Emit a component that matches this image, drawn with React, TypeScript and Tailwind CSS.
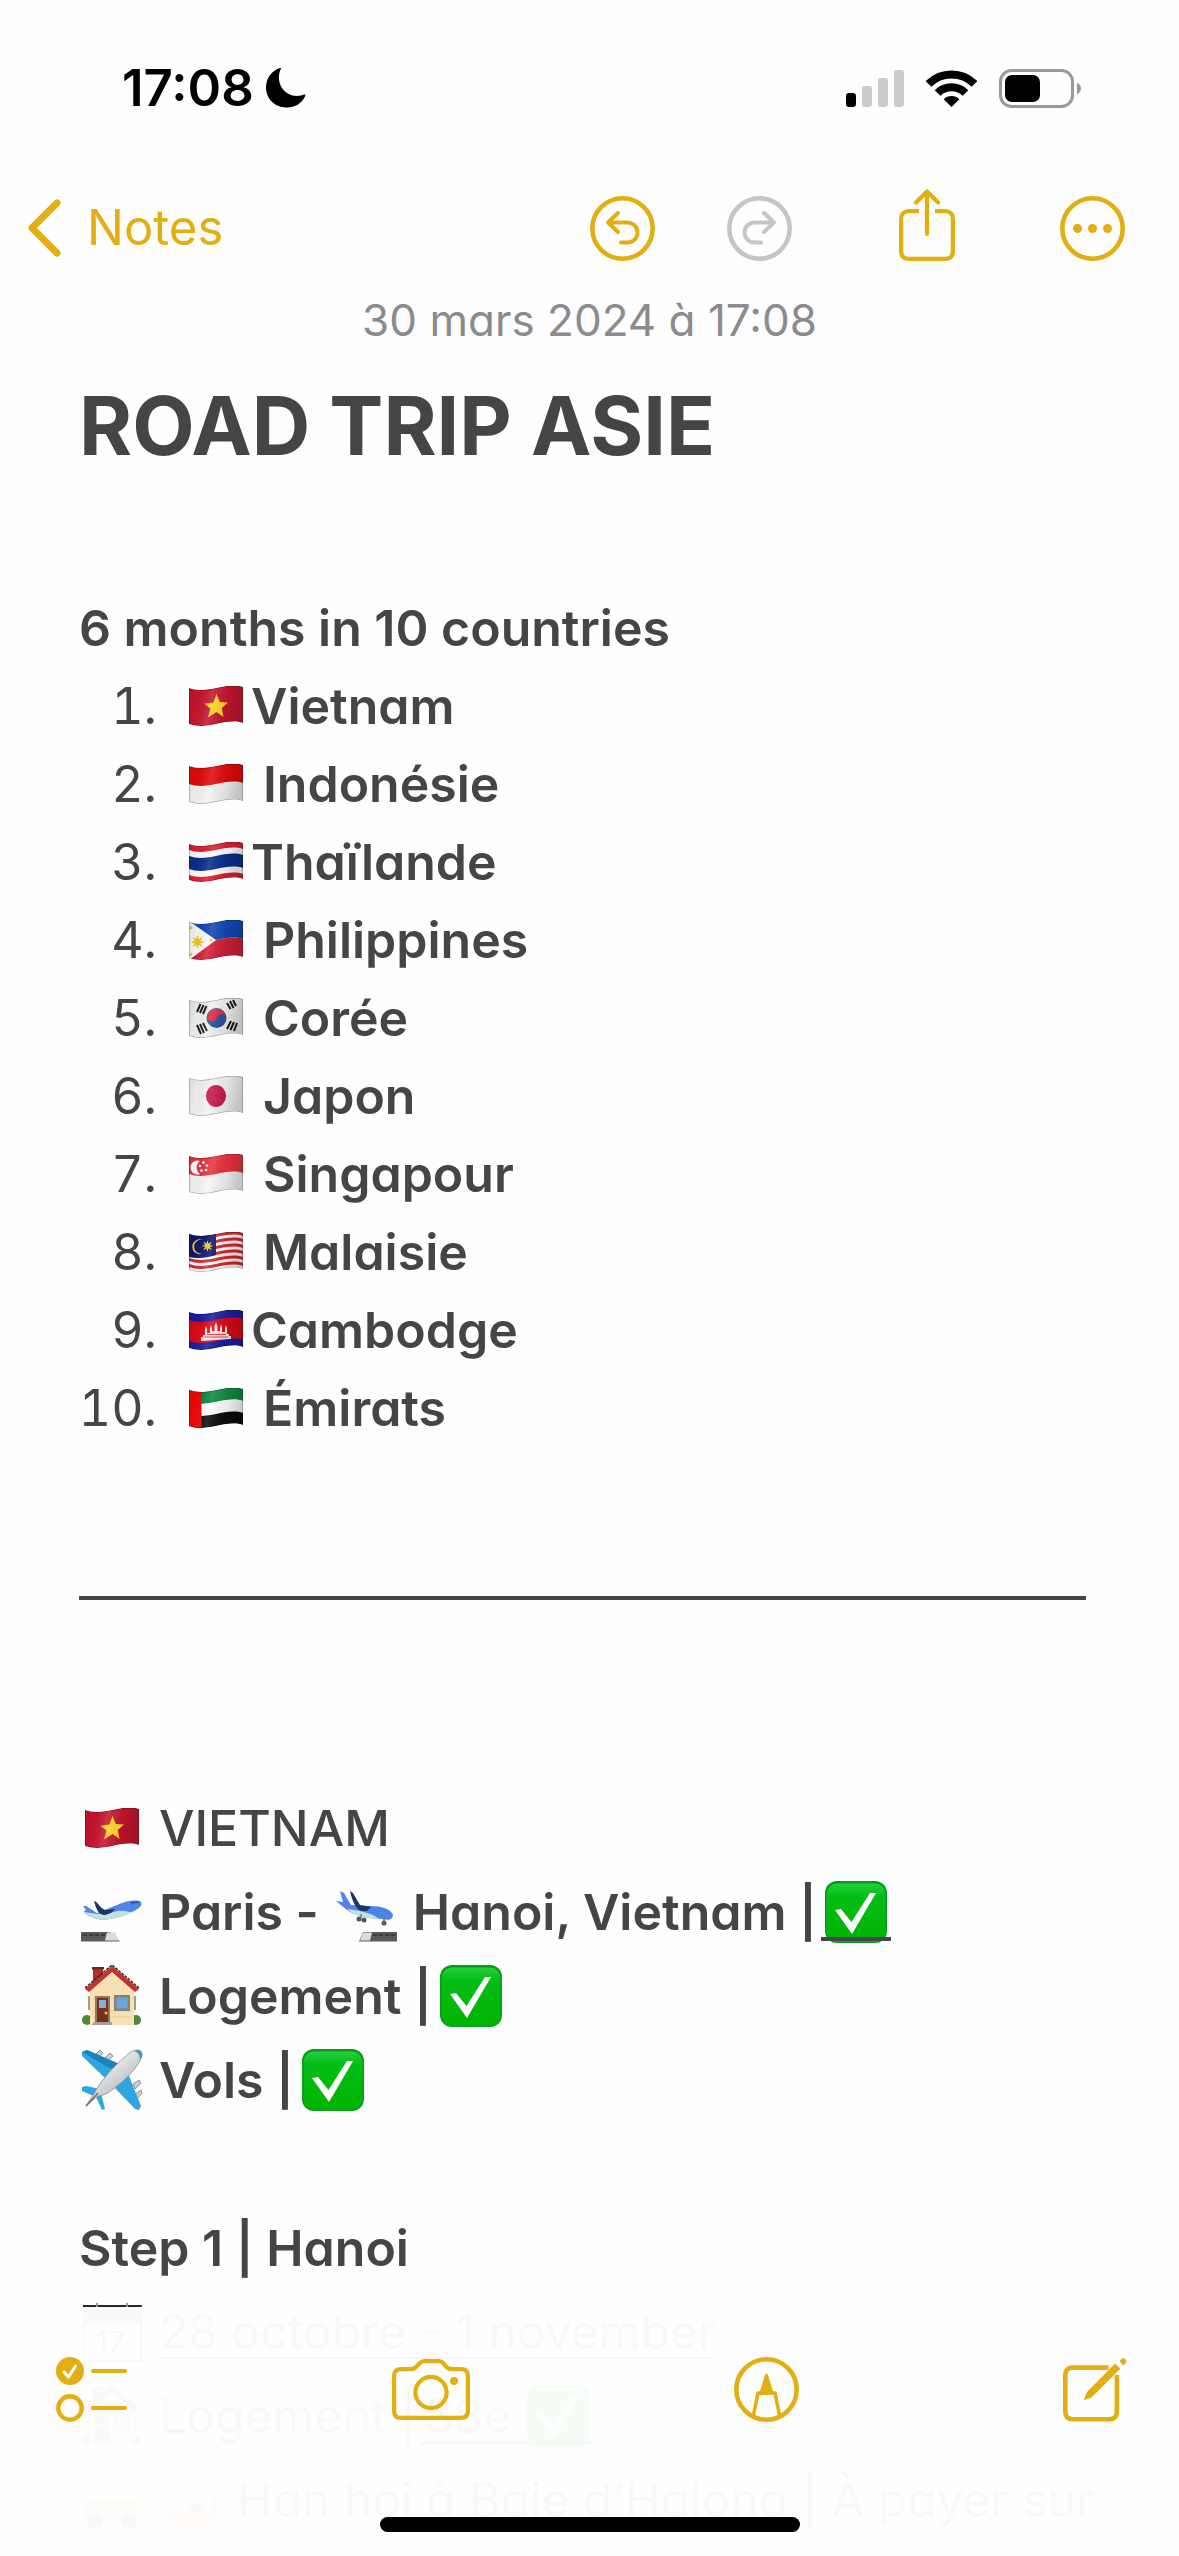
import { useId, type ReactNode } from "react";

const GOLD = "#e3ae12";

/* ---------- flags ---------- */

const edge = (y: number) => `0 ${y + 2} C8 ${y + 5} 18 ${y + 4} 27 ${y + 2} S46 ${y - 2} 54 ${y + 1}`;
const edgeBack = (y: number) => `54 ${y + 1} C46 ${y - 2} 36 ${y} 27 ${y + 2} S8 ${y + 5} 0 ${y + 2}`;
const band = (top: number, bottom: number) => `M${edge(top)} L${edgeBack(bottom)} Z`;

function Flag({ label, children }: { label: string; children: ReactNode }) {
  const id = useId();
  return (
    <svg role="img" aria-label={label} viewBox="0 0 54 40" className="h-10 w-[54px] shrink-0">
      <defs>
        <linearGradient id={`${id}g`} x1="0" x2="1" y1="0" y2="0.15">
          <stop offset="0" stopColor="#000" stopOpacity="0.12" />
          <stop offset="0.2" stopColor="#000" stopOpacity="0.04" />
          <stop offset="0.45" stopColor="#fff" stopOpacity="0.12" />
          <stop offset="0.75" stopColor="#000" stopOpacity="0.08" />
          <stop offset="1" stopColor="#000" stopOpacity="0.2" />
        </linearGradient>
        <clipPath id={`${id}c`}>
          <path d={band(0, 36)} />
        </clipPath>
      </defs>
      <g clipPath={`url(#${id}c)`}>
        {children}
        <path d={band(0, 36)} fill={`url(#${id}g)`} stroke="#000" strokeOpacity="0.28" strokeWidth="1.5" />
      </g>
    </svg>
  );
}

const STAR = "M27.5 8 L30.8 16 L39 16.5 L32.8 22 L34.5 31 L27.5 26 L19 31.5 L21.5 22.5 L15.5 17.8 L24.4 16.5 Z";

const FlagVietnam = () => (
  <Flag label="Drapeau du Vietnam">
    <path d={band(0, 36)} fill="#c8152f" />
    <path d={STAR} fill="#ffd827" />
  </Flag>
);
const FlagIndonesia = () => (
  <Flag label="Drapeau de l’Indonésie">
    <path d={band(0, 36)} fill="#f4f4f4" />
    <path d={band(0, 18)} fill="#e30a0a" />
  </Flag>
);
const FlagThailand = () => (
  <Flag label="Drapeau de la Thaïlande">
    <path d={band(0, 36)} fill="#dd2033" />
    <path d={band(6, 31)} fill="#fff" />
    <path d={band(12, 25)} fill="#0a2e8c" />
  </Flag>
);
const FlagPhilippines = () => (
  <Flag label="Drapeau des Philippines">
    <path d={band(0, 18)} fill="#0f48b5" />
    <path d={band(18, 36)} fill="#d3203a" />
    <path d="M0 1 L27 20 L0 40 Z" fill="#fafafa" />
    <circle cx="8.5" cy="22" r="3.4" fill="#f4c414" />
    <path
      d="M8.5 16v12M2.5 22h12M4.3 17.8l8.4 8.4M4.3 26.2l8.4-8.4"
      stroke="#f4c414"
      strokeWidth="1.4"
    />
    <g fill="#f4c414">
      <circle cx="2" cy="8" r="1.4" />
      <circle cx="22" cy="20" r="1.4" />
      <circle cx="2" cy="34.5" r="1.4" />
    </g>
  </Flag>
);
const FlagKorea = () => (
  <Flag label="Drapeau de la Corée">
    <path d={band(0, 36)} fill="#f1f1f1" />
    <circle cx="27.5" cy="20" r="10" fill="#28509c" />
    <path d="M17.6 19 A10 10 0 0 1 37.4 20 C36 15 29.500 15 27.500 20 C25.500 25 19.500 24 17.600 19 Z" fill="#dc2c40" />
    <g stroke="#1c1c1c" strokeWidth="2">
      <path d="M11.500 6 L8 14 M14.500 7 L11 15 M17.500 8 L14 16" />
      <path d="M38 5 L41.500 11 M41 3 L44.500 10 M44 2 L47 8" />
      <path d="M8 27 L12 36 M11 26 L15 35 M14 25 L18 33" />
      <path d="M42 23 L38 31 M45 24 L41.500 32 M48 25 L45 33" />
    </g>
  </Flag>
);
const FlagJapan = () => (
  <Flag label="Drapeau du Japon">
    <path d={band(0, 36)} fill="#f4f4f4" />
    <ellipse cx="27" cy="20" rx="10" ry="11" fill="#c7184a" />
  </Flag>
);
const FlagSingapore = () => (
  <Flag label="Drapeau de Singapour">
    <path d={band(0, 36)} fill="#f7f7f7" />
    <path d={band(0, 18)} fill="#e8343f" />
    <path d="M11 7 A7 7 0 1 0 11 20 A8 8 0 0 1 11 7 Z" fill="#fff" />
    <g fill="#fff">
      <circle cx="14.500" cy="8.500" r="1.300" />
      <circle cx="11" cy="12" r="1.300" />
      <circle cx="18" cy="11.500" r="1.300" />
      <circle cx="12.500" cy="16.500" r="1.300" />
      <circle cx="17" cy="16" r="1.300" />
    </g>
  </Flag>
);
const FlagMalaysia = () => (
  <Flag label="Drapeau de la Malaisie">
    <path d={band(0, 36)} fill="#fbfbfb" />
    {[0, 6, 12, 18, 24, 30].map((y) => (
      <path key={y} d={band(y, y + 3)} fill="#d8262d" />
    ))}
    <path d="M0 0 V25 C8 27 18 26 27 23 V0 Z" fill="#0d1a70" />
    <path d="M14 8 A7.500 7.500 0 1 0 14 21.500 A7 7 0 1 1 14 8 Z" fill="#f5c92a" />
    <circle cx="18.500" cy="14" r="3" fill="#f5c92a" />
    <path d="M18.500 9v10M13.500 14h10M15 10.500l7 7M15 17.500l7-7" stroke="#f5c92a" strokeWidth="1.200" />
  </Flag>
);
const FlagCambodia = () => (
  <Flag label="Drapeau du Cambodge">
    <path d={band(0, 36)} fill="#1a1ea0" />
    <path d={band(8, 29)} fill="#dd0a16" />
    <path
      d="M12 31 V27 H14 V25 H16 V19 L17 16 L18 19 V23 H21 V18 L22 15 L23 18 V21 H25.500 V16 L27 12 L28.500 16 V21 H31 V18 L32 14 L33 18 V22 H36 V18 L37 15 L38 18 V24 H40 V26 H42 V29 Z"
      fill="#fff"
      fillOpacity="0.9"
    />
    <path d="M16 27 H39 M18 24.500 H37" stroke="#dd0a16" strokeWidth="0.800" />
  </Flag>
);
const FlagEmirates = () => (
  <Flag label="Drapeau des Émirats arabes unis">
    <path d={band(0, 12)} fill="#0f8a43" />
    <path d={band(12, 24)} fill="#fff" />
    <path d={band(24, 36)} fill="#0c0c0c" />
    <path d="M0 0 H12.500 V40 H0 Z" fill="#f00a0a" />
  </Flag>
);

/* ---------- pictograms in the note ---------- */

function Check() {
  const id = useId();
  return (
    <svg role="img" aria-label="Fait" viewBox="0 0 62 62" className="h-[62px] w-[62px] shrink-0">
      <defs>
        <linearGradient id={id} x1="0" x2="0" y1="0" y2="1">
          <stop offset="0" stopColor="#27cf3c" />
          <stop offset="0.22" stopColor="#04bd16" />
          <stop offset="1" stopColor="#00b300" />
        </linearGradient>
      </defs>
      <rect width="62" height="62" rx="12" fill="#079a1b" />
      <rect x="1.500" y="2.500" width="59" height="58.500" rx="11" fill={`url(#${id})`} />
      <path d="M10 29 L16 28 L26.500 41 L45 12 H51 L27 53 Z" fill="#fff" />
    </svg>
  );
}

const Departure = () => (
  <svg role="img" aria-label="Départ" viewBox="0 0 62 62" className="h-[62px] w-[62px] shrink-0">
    <path d="M0 51 H29 L39 60.500 H0 Z" fill="#5a5a5a" />
    <path d="M26 51.500 H34 L38 59.500 H24 Z" fill="#dcdcdc" />
    <path d="M2 54 H25" stroke="#3a3a3a" strokeWidth="2" strokeDasharray="4 2" />
    <path d="M2 25 L5 25 L16 32 L36 24 C44 20 56 18 60 21 C62 24 58 28 51 31 C38 37 25 40 17 38 C10 37 4 33 3 30 L5 29 Z" fill="#4f86e6" />
    <path d="M4 31 C14 33 22 34 32 31 C42 28 46 31 51 31 C38 37 25 40 17 38 C10 37 6 34 4 31 Z" fill="#bfe0e4" />
    <path d="M13 20 C17 21 19 27 24 29 L34 28 L30 32 L24 34 C17 34 15 27 13 20 Z" fill="#1f3566" />
    <path d="M50 22 L58 21" stroke="#2a4fa0" strokeWidth="1.500" />
  </svg>
);

const Arrival = () => (
  <svg role="img" aria-label="Arrivée" viewBox="0 0 62 62" className="h-[62px] w-[62px] shrink-0">
    <path d="M28 51 H62 V60.500 H24 Z" fill="#5a5a5a" />
    <path d="M28 51.500 H37 L35 59.500 H25 Z" fill="#dcdcdc" />
    <path d="M38 54 H61" stroke="#3a3a3a" strokeWidth="2" strokeDasharray="4 2" />
    <path d="M5 10 L9 12 L16 24 L36 25 C46 25 56 28 58 34 C58 38 54 40 48 38 C36 38 20 35 12 29 L1 20 L8 21 Z" fill="#4f83e8" />
    <path d="M12 28 C22 29 38 32 44 38 C32 37 20 35 12 28 Z" fill="#c3e2e6" />
    <path d="M15 10 L18 12 L25 24 L36 26 L32 30 L26 30 C20 27 17 19 15 10 Z" fill="#1f3566" />
    <g fill="#555">
      <circle cx="24" cy="38" r="2.500" />
      <circle cx="29" cy="39" r="2.500" />
      <circle cx="49" cy="42" r="2.500" />
    </g>
    <path d="M49 37 V42 M26 33 V37" stroke="#777" strokeWidth="1.500" />
  </svg>
);

const House = () => (
  <svg role="img" aria-label="Maison" viewBox="0 0 62 62" className="h-[62px] w-[62px] shrink-0">
    <path d="M12 2 H22 V12 L12 22 Z" fill="#a8322c" />
    <path d="M11 2 H23 V4.500 H11 Z" fill="#7c211f" />
    <circle cx="6" cy="55" r="5" fill="#4c8a34" />
    <circle cx="55" cy="55" r="5" fill="#4c8a34" />
    <path d="M9 26 L31 5 L53 26 V60 H9 Z" fill="#f6e0b4" />
    <path d="M12 34H50M12 40H50M12 46H50M12 52H50" stroke="#e6cb98" strokeWidth="1" />
    <path d="M4 24 L31 1 L58 24 L54 27 L31 7 L8 27 Z" fill="#bf3430" />
    <path d="M4 23 L31 0 L58 23" fill="none" stroke="#4a2322" strokeWidth="1.500" strokeDasharray="3 1" />
    <path d="M14 31 H29 V58 H14 Z" fill="#8c7a64" />
    <path d="M16 33 H27 V57 H16 Z" fill="#7c2f1d" />
    <path d="M18 35 H25 V43 H18 Z" fill="#7fb2e0" />
    <circle cx="25" cy="48" r="1.500" fill="#f4c53a" />
    <path d="M33 30 H49 V46 H33 Z" fill="#8c8272" />
    <path d="M35.500 32.500 H46.500 V43.500 H35.500 Z" fill="#67a6e0" />
    <path d="M7 31 H9 V45 H7 Z M53 31 H55 V45 H53 Z" fill="#a89a84" />
    <path d="M13 57 H31 V60 H11 Z" fill="#a5a09a" />
  </svg>
);

function Airplane() {
  const id = useId();
  return (
    <svg role="img" aria-label="Avion" viewBox="0 0 62 62" className="h-[62px] w-[62px] shrink-0">
      <defs>
        <linearGradient id={id} x1="0.200" x2="0.700" y1="0.200" y2="0.800">
          <stop offset="0" stopColor="#fafafa" />
          <stop offset="1" stopColor="#b4b6ba" />
        </linearGradient>
      </defs>
      <g fill="#c9ccd0" stroke="#777b80" strokeWidth="0.800">
        <path d="M14 6 L19 1 L22 4 L17 9 Z M24 9 L29 4 L32 7 L27 12 Z" />
        <path d="M52 35 L58 31 L60 34 L54 40 Z M54 45 L60 41 L61 44 L56 50 Z" />
      </g>
      <path d="M1 3 L6 1 L36 14 L48 27 L60 57 L58 61 L54 60 L33 38 L23 28 L1 7 Z" fill="#2fa6e0" />
      <path d="M1 3 L6 1 L36 14 L40 20 L28 19 Z" fill="#1c83ba" />
      <path d="M1 38 L5 37 L19 40 L24 60 L21 61 L15 48 L1 42 Z" fill="#2fa6e0" />
      <path d="M5 57 L14 43 C22 28 38 12 50 3 C56 -1 61 1 61 6 C60 14 48 28 36 37 C28 44 22 47 17 47 Z" fill={`url(#${id})`} stroke="#8b8e93" strokeWidth="0.800" />
      <path d="M58 1 C62 2 62 8 59 11 C59 6 57 3 53 2 Z" fill="#3a98cc" />
      <path d="M5 57 L17 44" stroke="#6c6f74" strokeWidth="1.500" />
    </svg>
  );
}

const Calendar = () => (
  <svg role="img" aria-label="Calendrier" viewBox="0 0 62 62" className="h-[62px] w-[62px] shrink-0">
    <path d="M3 5 H60 V60 H3 Z" fill="#f4f4f4" stroke="#444" strokeWidth="2" />
    <path d="M3 6 H60 V22 H3 Z" fill="#e2483c" />
    <path d="M2 4 H60 V7 H2 Z" fill="#24272c" />
    <path d="M16 2 V8 M46 2 V8" stroke="#8a94a6" strokeWidth="2" />
    <text x="15" y="52" fontSize="30" fill="#333">17</text>
  </svg>
);

const Bus = () => (
  <svg role="img" aria-label="Bus" viewBox="0 0 62 62" className="h-[62px] w-[62px] shrink-0">
    <path d="M4 14 Q5 9 10 9 H54 Q59 9 60 14 L62 52 H2 Z" fill="#f2c33a" />
    <path d="M4 14 Q5 9 10 9 H54 Q59 9 60 14 L61 32 H3 Z" fill="#cfe4ea" />
    <circle cx="14" cy="52" r="8" fill="#444" />
    <circle cx="48" cy="52" r="8" fill="#444" />
  </svg>
);

const Boat = () => (
  <svg role="img" aria-label="Bateau" viewBox="0 0 62 62" className="h-[62px] w-[62px] shrink-0">
    <path d="M2 44 H60 L56 58 H16 Q6 54 2 44 Z" fill="#f2a43a" />
    <path d="M28 43 L34 35 H44 L48 43 Z" fill="#7a8794" />
    <path d="M50 43 L56 30 H59 L57 43 Z" fill="#7a8794" />
  </svg>
);

/* ---------- system and toolbar icons ---------- */

const Moon = () => (
  <svg aria-label="Ne pas déranger" role="img" viewBox="0 0 40 40" className="h-10 w-10">
    <path d="M15 0.500 C11 9 13 18 19 23.500 C25 28.500 32 29 38 26.500 Q40 26 39 28.500 C35.500 35.500 29 39.500 21 39.500 C9 39.500 0 31 0 19.500 C0 10.500 5.500 3 13 0.300 Q15.500 -0.500 15 0.500 Z" />
  </svg>
);

const Signal = () => (
  <svg aria-label="Réseau" role="img" viewBox="0 0 58 37" className="h-[37px] w-[58px]">
    <rect x="0" y="23" width="10" height="14" rx="3" />
    <g fill="#cbcbcb">
      <rect x="16" y="16" width="10" height="21" rx="3" />
      <rect x="32" y="8" width="10" height="29" rx="3" />
      <rect x="48" y="0" width="10" height="37" rx="3" />
    </g>
  </svg>
);

const Wifi = () => (
  <svg aria-label="Wi-Fi" role="img" viewBox="0 0 51 37" className="h-[37px] w-[51px]">
    <g fill="none" stroke="#000" strokeWidth="8">
      <path d="M2.500 14 A32.600 32.600 0 0 1 48.500 14" />
      <path d="M11.500 23 A20 20 0 0 1 39.500 23" />
    </g>
    <path d="M25.500 37 L17.700 29.200 A11 11 0 0 1 33.300 29.200 Z" />
  </svg>
);

const Battery = () => (
  <svg aria-label="Batterie" role="img" viewBox="0 0 82 39" className="h-[39px] w-[82px]">
    <rect x="1.500" y="1.500" width="72" height="36" rx="11" fill="none" stroke="#999" strokeWidth="3" />
    <rect x="6" y="6" width="35" height="27" rx="7" />
    <path d="M78 13.500 Q82 16 82 19.500 Q82 23 78 25.500 Z" fill="#999" />
  </svg>
);

const ArrowCircle = ({ color, flip }: { color: string; flip?: boolean }) => (
  <svg viewBox="0 0 65 65" className={flip ? "h-[65px] w-[65px] -scale-x-100" : "h-[65px] w-[65px]"} fill="none" stroke={color} strokeLinecap="round" strokeLinejoin="round">
    <circle cx="32.500" cy="32.500" r="30.200" strokeWidth="4.600" />
    <path d="M18 26.500 H37.500 A10 10 0 0 1 37.500 46.500 H31 M28 17 L18 26.500 L28 36" strokeWidth="4" />
  </svg>
);

const Share = () => (
  <svg viewBox="0 0 56 72" className="h-[72px] w-14" fill="none" stroke={GOLD} strokeWidth="4.200">
    <path d="M20 22.200 H10 Q2.100 22.200 2.100 30 V62 Q2.100 69.900 10 69.900 H46 Q53.900 69.900 53.900 62 V30 Q53.900 22.200 46 22.200 H36" />
    <path d="M28 3 V45 M17 13.500 L28 2.500 L39 13.500" strokeLinecap="round" strokeLinejoin="round" />
  </svg>
);

const More = () => (
  <svg viewBox="0 0 65 65" className="h-[65px] w-[65px]" fill={GOLD}>
    <circle cx="32.500" cy="32.500" r="30.200" fill="none" stroke={GOLD} strokeWidth="4.600" />
    <circle cx="17.500" cy="32.500" r="4.500" />
    <circle cx="32.500" cy="32.500" r="4.500" />
    <circle cx="47.500" cy="32.500" r="4.500" />
  </svg>
);

const Checklist = () => (
  <svg viewBox="0 0 72 65" className="h-[65px] w-[72px]" fill="none" stroke={GOLD} strokeLinecap="round" strokeLinejoin="round">
    <circle cx="14" cy="14" r="14" fill={GOLD} stroke="none" />
    <path d="M8 15 L12.500 20 L19.500 9" stroke="#fff" strokeWidth="3" />
    <circle cx="14" cy="51" r="11.700" strokeWidth="4.400" />
    <path d="M37 14 H69 M37 51 H69" strokeWidth="4.200" />
  </svg>
);

const Camera = () => (
  <svg viewBox="0 0 78 61" className="h-[61px] w-[78px]" fill="none" stroke={GOLD} strokeWidth="4.200" strokeLinejoin="round">
    <path d="M9 10.100 H19 Q22 10.100 24 8 L28 4 Q30 2.100 33 2.100 H46 Q49 2.100 51 4 L54.500 8 Q56.500 10.100 59.500 10.100 H69 Q75.900 10.100 75.900 17 V52 Q75.900 58.900 69 58.900 H9 Q2.100 58.900 2.100 52 V17 Q2.100 10.100 9 10.100 Z" />
    <circle cx="39" cy="33.500" r="15.600" />
    <circle cx="62" cy="22" r="4" fill={GOLD} stroke="none" />
  </svg>
);

const Marker = () => (
  <svg viewBox="0 0 65 65" className="h-[65px] w-[65px]" fill="none" stroke={GOLD}>
    <circle cx="32.500" cy="32.500" r="30.200" strokeWidth="4.600" />
    <path d="M19.500 58 L24 36 H41 L45.500 58" strokeWidth="3.600" strokeLinejoin="round" />
    <path d="M31 18 Q32.500 15.500 34 18 L40 37.500 H25 Z" fill={GOLD} stroke="none" />
  </svg>
);

const Compose = () => (
  <svg viewBox="0 0 64 64" className="h-16 w-16" fill="none" stroke={GOLD}>
    <path d="M45.500 9.600 H10 Q2.300 9.600 2.300 17 V53.500 Q2.300 61.200 10 61.200 H46 Q53.900 61.200 53.900 53.500 V17" strokeWidth="4.600" />
    <path d="M52 5.500 L57.500 10.500 L28.500 39.500 L21 42.500 Q20.500 42 24 34 Z" fill={GOLD} stroke="none" />
    <path d="M56.500 3 L59 0.500 Q61 -0.500 62.500 1.500 Q64 3.500 62.500 5.500 L60 7.500 Z" fill={GOLD} stroke="none" />
  </svg>
);

/* ---------- note ---------- */

const countries = [
  { name: "Vietnam", Icon: FlagVietnam, gap: false },
  { name: "Indonésie", Icon: FlagIndonesia, gap: true },
  { name: "Thaïlande", Icon: FlagThailand, gap: false },
  { name: "Philippines", Icon: FlagPhilippines, gap: true },
  { name: "Corée", Icon: FlagKorea, gap: true },
  { name: "Japon", Icon: FlagJapan, gap: true },
  { name: "Singapour", Icon: FlagSingapore, gap: true },
  { name: "Malaisie", Icon: FlagMalaysia, gap: true },
  { name: "Cambodge", Icon: FlagCambodia, gap: false },
  { name: "Émirats", Icon: FlagEmirates, gap: true },
];

const Line = ({ children }: { children: ReactNode }) => (
  <p className="flex h-[84px] items-center gap-4 pl-0.5 whitespace-nowrap">{children}</p>
);

const Underlined = ({ children }: { children: ReactNode }) => (
  <span className="relative -ml-3 flex items-center gap-4 px-1 after:absolute after:inset-x-0 after:bottom-0.5 after:h-1 after:bg-[#454545]">
    {children}
  </span>
);

const Done = () => (
  <span className="-ml-2">
    <Check />
  </span>
);

export default function App() {
  return (
    <div className="min-h-screen overflow-x-hidden bg-[#fefefe] font-[Inter,sans-serif] text-[50px] leading-[60px] text-[#454545] [font-feature-settings:'cv11']">
      <header>
        <div className="flex h-[154px] items-center justify-between pt-[22px] pr-[98px] pl-[122px] text-black">
          <div className="flex items-center gap-3 text-[51px] font-semibold">
            <time>17:08</time>
            <Moon />
          </div>
          <div className="flex items-center gap-[22px]">
            <Signal />
            <Wifi />
            <Battery />
          </div>
        </div>
        <nav className="flex h-[136px] items-center pt-3 pr-[54px] pl-7">
          <a href="#notes" className="mr-auto flex items-center gap-[26px] text-[49px] text-[#e3ae12]">
            <svg viewBox="0 0 33 58" className="h-[58px] w-[33px]" fill="none" stroke={GOLD} strokeWidth="7" strokeLinecap="round" strokeLinejoin="round">
              <path d="M29 4 L4 29 L29 54" />
            </svg>
            Notes
          </a>
          <button type="button" aria-label="Annuler" className="mr-[72px]">
            <ArrowCircle color={GOLD} />
          </button>
          <button type="button" aria-label="Rétablir" disabled className="mr-[107px]">
            <ArrowCircle color="#c5c5c7" flip />
          </button>
          <button type="button" aria-label="Partager" className="mr-[105px] pb-1.5">
            <Share />
          </button>
          <button type="button" aria-label="Plus">
            <More />
          </button>
        </nav>
      </header>

      <main className="px-[79px]">
        <p className="text-center text-[44px] text-[#8b8b8f]">30 mars 2024 à 17:08</p>
        <h1 className="mt-[26px] text-[81px] leading-[100px] font-bold">ROAD TRIP ASIE</h1>

        <h2 className="mt-[113px] leading-[78px] font-semibold">6 months in 10 countries</h2>
        <ol>
          {countries.map(({ name, Icon, gap }, i) => (
            <li key={name} className="flex h-[78px] items-center font-semibold">
              <span className="flex w-[78px] shrink-0 justify-end font-normal tabular-nums">{i + 1}.</span>
              <span className={gap ? "ml-8 flex items-center gap-5" : "ml-8 flex items-center gap-2"}>
                <Icon />
                {name}
              </span>
            </li>
          ))}
        </ol>

        <hr className="mt-[149px] mr-[14px] border-t-4 border-[#454545]" />

        <section className="mt-[186px] font-semibold">
          <h2 className="flex h-[84px] items-center gap-5 pl-1.5 font-medium">
            <FlagVietnam />
            VIETNAM
          </h2>
          <Line>
            <Departure />
            Paris -
            <Arrival />
            Hanoi, Vietnam |
            <Underlined>
              <Check />
            </Underlined>
          </Line>
          <Line>
            <House />
            Logement |
            <Done />
          </Line>
          <Line>
            <Airplane />
            Vols |
            <Done />
          </Line>
        </section>

        <section className="mt-[84px]">
          <h2 className="leading-[84px] font-semibold">Step 1 | Hanoi</h2>
          <div className="text-[48px]">
            <Line>
              <Calendar />
              <span className="underline decoration-2 underline-offset-8">28 octobre - 1 november</span>
            </Line>
            <Line>
              <House />
              Logement |
              <Underlined>
                38e
                <Check />
              </Underlined>
            </Line>
            <Line>
              <Bus />
              <Boat />
              Han hoi à Baie d’Halong | À payer sur
            </Line>
          </div>
        </section>
      </main>

      <footer className="fixed inset-x-0 bottom-0 h-[249px] bg-[#fefefe]/97">
        <div className="flex items-center justify-between pt-[50px] pr-[52px] pl-14">
          <button type="button" aria-label="Liste de pointage">
            <Checklist />
          </button>
          <button type="button" aria-label="Appareil photo">
            <Camera />
          </button>
          <button type="button" aria-label="Balisage">
            <Marker />
          </button>
          <button type="button" aria-label="Nouvelle note">
            <Compose />
          </button>
        </div>
        <div className="absolute bottom-6 left-1/2 h-[15px] w-[420px] -translate-x-1/2 rounded-full bg-black" />
      </footer>
    </div>
  );
}
